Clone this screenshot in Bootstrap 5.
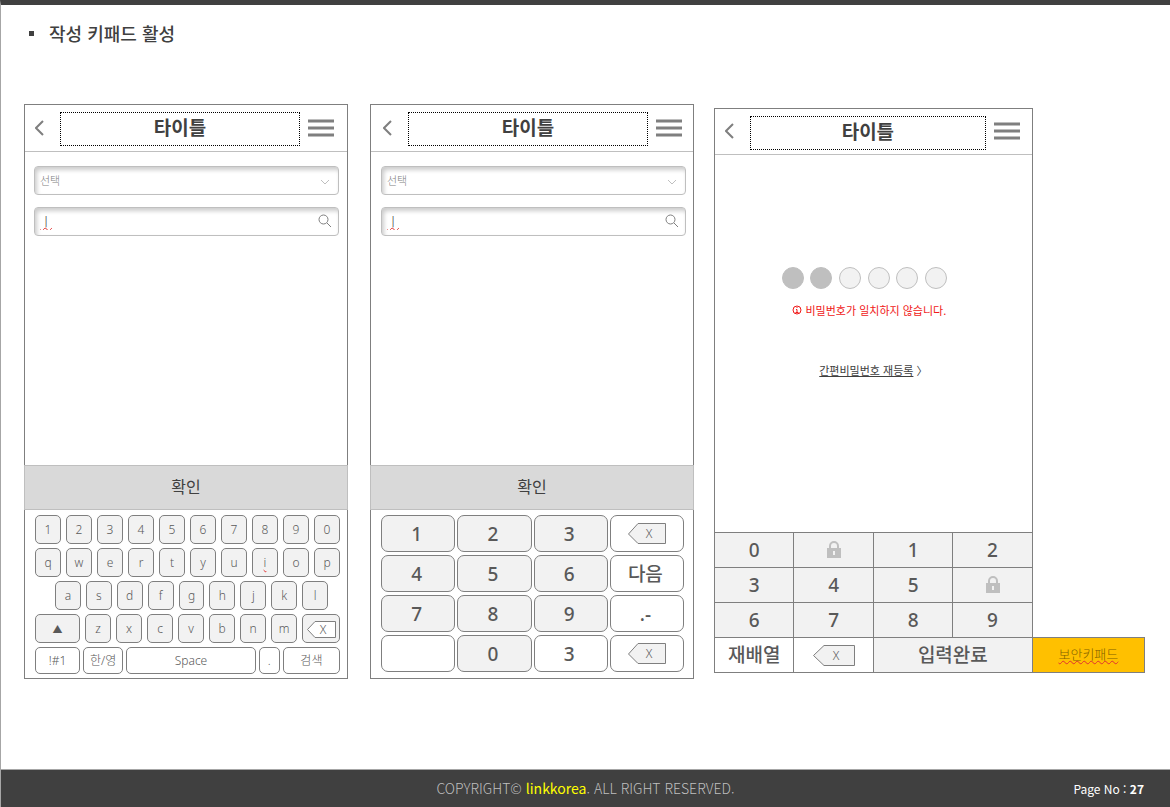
<!DOCTYPE html>
<html lang="ko">
<head>
<meta charset="utf-8">
<meta name="viewport" content="width=device-width, initial-scale=1">
<title>작성 키패드 활성</title>
<link href="https://cdn.jsdelivr.net/npm/bootstrap@5.3.0/dist/css/bootstrap.min.css" rel="stylesheet">
<style>
  body { font-family: "Noto Sans", "Noto Sans CJK KR", sans-serif; color: #404040; }
  .sheet { border-top: 5px solid #404040; border-left: 1px solid #a6a6a6; }
  .sheet-title { font: 500 18px/26px "Noto Sans CJK KR", sans-serif; padding: 15px 28px 17px; gap: 15px; }
  .sheet-title::before { content: ""; width: 5px; height: 5px; background: #404040; }
  .board { display: grid; grid-template-columns: 346fr 344fr 431fr; padding: 41px 25px 0 23px; align-items: start; align-content: start; }
  .phone { border: 1px solid #7f7f7f; }
  .phone-first { margin-right: 22px; }
  .phone-second { margin-right: 20px; }
  .phone-pin { flex: 319 1 0; }
  .phone-bar { height: 47px; padding: 0 13px 1px 10px; border-bottom: 1px solid #bfbfbf; }
  .phone-second .phone-bar { padding-left: 12px; padding-right: 11px; }
  .phone-second .fields { padding-left: 10px; padding-right: 7px; }
  .phone-pin .phone-bar { height: 46px; padding-right: 12px; }
  .phone-title { border: 1px dotted #000; height: 34px; margin: 3px 8px 0 16px; font: 700 19px/28px "Noto Sans CJK KR", sans-serif; }
  .fields { padding: 14px 8px 0 9px; gap: 12px; height: 313px; }
  .field { height: 29px; width: 100%; border: 1px solid #bfbfbf; border-radius: 4px; background: #fff; padding: 0 28px 2px 5px; font: 300 11px/24px "Noto Sans CJK KR", sans-serif; color: #7f7f7f; box-shadow: inset 2px 3px 4px #ccc; appearance: none; }
  .field-entry { font-size: 13px; color: #404040; }
  .field-icon { position: absolute; right: 7px; top: 7px; pointer-events: none; }
  .squiggle { text-decoration: underline wavy #e03030 1px; text-decoration-skip-ink: none; }
  .confirm { height: 45px; margin: 0 -1px; width: calc(100% + 2px); background: #d9d9d9; border: 1px solid #bfbfbf; font: 400 16px/24px "Noto Sans CJK KR", sans-serif; color: #404040; padding: 0 0 3px; }
  .key { min-width: 0; padding: 0; border: 1px solid #7f7f7f; border-radius: 5px; background: #f2f2f2; color: #595959; font-size: 12px; font-weight: 300; line-height: 16px; }
  .key-plain { background: #fff; }
  .letters { padding: 5px 7px 4px 10px; display: grid; gap: 4px; }
  .letters .key { padding-top: 1px; }
  .key-row { display: grid; gap: 5px; height: 29px; }
  .row-ten { grid-template-columns: repeat(10, 1fr); }
  .row-nine { grid-template-columns: repeat(9, 1fr); padding: 0 12px 0 20px; }
  .row-shift { grid-template-columns: 45fr repeat(7, 26fr) 38fr; }
  .row-space { grid-template-columns: 45fr 40fr 129fr 21fr 57fr; gap: 3px; height: 27px; }
  .shift { font-size: 10px; }
  .digits { padding: 5px 9px 6px 10px; display: grid; grid-template-columns: repeat(4, 1fr); grid-auto-rows: 37px; column-gap: 2px; row-gap: 3px; }
  .digits .key, .secure .key { font-size: 19px; font-weight: 500; line-height: 24px; }
  .digits .key { border-radius: 7px; padding-right: 3px; }
  .digits .erase { padding-right: 0; }
  .passcode { height: 377px; padding-top: 112px; }
  .pin { width: 22px; height: 22px; border: 1px solid #bfbfbf; border-radius: 50%; background: #f2f2f2; }
  .pin-on { background: #bfbfbf; }
  .pins { width: 165px; margin: 0 auto; position: relative; }
  .pins-wrap { padding-right: 18px; }
  .error-line { color: #f01818; font: 400 11px/16px "Noto Sans CJK KR", sans-serif; margin-top: 13px; gap: 3px; padding-right: 8px; }
  .again { color: #404040; font: 400 11px/16px "Noto Sans CJK KR", sans-serif; margin-top: 44px; }
  .secure { display: grid; grid-template-columns: repeat(4, 1fr); grid-auto-rows: 34px; gap: 1px; background: #7f7f7f; border-top: 1px solid #7f7f7f; }
  .secure .key { border: 0; border-radius: 0; }
  .wide { grid-column: span 2; }
  .tag { flex: 112 1 0; height: 36px; background: #ffc000; border: 1px solid #7f7f7f; border-left: 0; color: #7f6000; font: 300 13px/18px "Noto Sans CJK KR", sans-serif; padding-bottom: 2px; }
  .foot { height: 38px; background: #404040; border-top: 1px solid #a6a6a6; color: #bfbfbf; font: 300 14px/20px "Noto Sans CJK KR", sans-serif; padding-bottom: 2px; }
  .foot a { color: #ff0; font-weight: 400; }
  .page-no { color: #fff; font-size: 12px; font-weight: 400; padding-right: 26px; }
</style>
<script src="https://cdn.jsdelivr.net/npm/bootstrap@5.3.0/dist/js/bootstrap.bundle.min.js"></script>
</head>
<body>
<svg class="d-none">
  <symbol id="back" viewBox="0 0 9 16"><path d="M8 1 1 8l7 7" fill="none" stroke="#7f7f7f" stroke-width="2"/></symbol>
  <symbol id="menu" viewBox="0 0 26 18"><path d="M0 2h26M0 9h26M0 16h26" stroke="#7f7f7f" stroke-width="3"/></symbol>
  <symbol id="down" viewBox="0 0 14 14"><path d="m3 7 4 4 4-4" fill="none" stroke="#bfbfbf"/></symbol>
  <symbol id="find" viewBox="0 0 14 14"><circle cx="5.500" cy="5.500" r="4.500" fill="none" stroke="#7f7f7f"/><path d="m9 9 4 4" stroke="#7f7f7f"/></symbol>
  <symbol id="lock" viewBox="0 0 16 18"><path d="M4 8V5a4 4 0 0 1 8 0v3" fill="none" stroke="#bfbfbf" stroke-width="2"/><path d="M1 7h14v10H1zM7 10v4h2v-4z" fill="#bfbfbf" fill-rule="evenodd"/></symbol>
</svg>
<div class="sheet min-vh-100 d-flex flex-column">
  <h1 class="sheet-title d-flex align-items-center m-0">작성 키패드 활성</h1>
  <main class="board flex-grow-1">
    <section class="phone phone-first">
      <header class="phone-bar d-flex align-items-center">
        <svg width="9" height="16"><use href="#back"/></svg>
        <h2 class="phone-title flex-grow-1 text-center">타이틀</h2>
        <svg width="26" height="18"><use href="#menu"/></svg>
      </header>
      <div class="fields d-flex flex-column">
        <div class="position-relative"><select class="field d-block" aria-label="선택"><option>선택</option></select><svg class="field-icon" width="14" height="14"><use href="#down"/></svg></div>
        <div class="position-relative"><input class="field field-entry squiggle d-block" aria-label="검색" value="ㅣ"><svg class="field-icon" width="14" height="14"><use href="#find"/></svg></div>
      </div>
      <button class="confirm d-block">확인</button>
      <div class="letters">
        <div class="key-row row-ten"><button class="key">1</button><button class="key">2</button><button class="key">3</button><button class="key">4</button><button class="key">5</button><button class="key">6</button><button class="key">7</button><button class="key">8</button><button class="key">9</button><button class="key">0</button></div>
        <div class="key-row row-ten"><button class="key">q</button><button class="key">w</button><button class="key">e</button><button class="key">r</button><button class="key">t</button><button class="key">y</button><button class="key">u</button><button class="key"><span class="squiggle">i</span></button><button class="key">o</button><button class="key">p</button></div>
        <div class="key-row row-nine"><button class="key">a</button><button class="key">s</button><button class="key">d</button><button class="key">f</button><button class="key">g</button><button class="key">h</button><button class="key">j</button><button class="key">k</button><button class="key">l</button></div>
        <div class="key-row row-shift"><button class="key shift">▲</button><button class="key">z</button><button class="key">x</button><button class="key">c</button><button class="key">v</button><button class="key">b</button><button class="key">n</button><button class="key">m</button><button class="key" aria-label="삭제"><svg class="d-block mx-auto" width="29" height="17" viewBox="0 0 29 17"><path d="M.5 8.500 8 .5h20.500v16H8z" fill="#fff" stroke="#7f7f7f"/><text x="16" y="13" text-anchor="middle" font-size="12" fill="#595959">X</text></svg></button></div>
        <div class="key-row row-space"><button class="key key-plain">!#1</button><button class="key key-plain">한/영</button><button class="key key-plain">Space</button><button class="key key-plain">.</button><button class="key key-plain">검색</button></div>
      </div>
    </section>
    <section class="phone phone-second">
      <header class="phone-bar d-flex align-items-center">
        <svg width="9" height="16"><use href="#back"/></svg>
        <h2 class="phone-title flex-grow-1 text-center">타이틀</h2>
        <svg width="26" height="18"><use href="#menu"/></svg>
      </header>
      <div class="fields d-flex flex-column">
        <div class="position-relative"><select class="field d-block" aria-label="선택"><option>선택</option></select><svg class="field-icon" width="14" height="14"><use href="#down"/></svg></div>
        <div class="position-relative"><input class="field field-entry squiggle d-block" aria-label="검색" value="ㅣ"><svg class="field-icon" width="14" height="14"><use href="#find"/></svg></div>
      </div>
      <button class="confirm d-block">확인</button>
      <div class="digits">
        <button class="key">1</button><button class="key">2</button><button class="key">3</button>
        <button class="key key-plain erase" aria-label="삭제"><svg class="d-block mx-auto" width="38" height="22" viewBox="0 0 38 22"><path d="M.5 11 10 .5h27.500v20H10z" fill="#f2f2f2" stroke="#7f7f7f"/><text x="21" y="15" text-anchor="middle" font-size="12" font-weight="300" fill="#595959">X</text></svg></button>
        <button class="key">4</button><button class="key">5</button><button class="key">6</button><button class="key key-plain">다음</button>
        <button class="key">7</button><button class="key">8</button><button class="key">9</button><button class="key key-plain">.-</button>
        <button class="key key-plain" aria-label="빈 키"></button><button class="key">0</button><button class="key key-plain">3</button>
        <button class="key key-plain erase" aria-label="삭제"><svg class="d-block mx-auto" width="38" height="22" viewBox="0 0 38 22"><path d="M.5 11 10 .5h27.500v20H10z" fill="#f2f2f2" stroke="#7f7f7f"/><text x="21" y="15" text-anchor="middle" font-size="12" font-weight="300" fill="#595959">X</text></svg></button>
      </div>
    </section>
    <div class="d-flex align-items-end pt-1">
      <section class="phone phone-pin">
        <header class="phone-bar d-flex align-items-center">
          <svg width="9" height="16"><use href="#back"/></svg>
          <h2 class="phone-title flex-grow-1 text-center">타이틀</h2>
          <svg width="26" height="18"><use href="#menu"/></svg>
        </header>
        <div class="passcode text-center">
          <div class="pins-wrap"><div class="pins d-flex justify-content-between"><i class="pin pin-on"></i><i class="pin pin-on"></i><i class="pin"></i><i class="pin"></i><i class="pin"></i><i class="pin"></i></div></div>
          <p class="error-line d-flex align-items-center justify-content-center mb-0"><svg width="10" height="10" viewBox="0 0 10 10"><circle cx="5" cy="5" r="4" fill="none" stroke="currentColor"/><path d="M5 2v1M4 4.500h1V8M3.500 7.500h3" fill="none" stroke="currentColor"/></svg>비밀번호가 일치하지 않습니다.</p>
          <p class="again mb-0"><a class="text-reset" href="#">간편비밀번호 재등록</a> 〉</p>
        </div>
        <div class="secure">
          <button class="key">0</button><button class="key" aria-label="잠금"><svg class="d-block mx-auto" width="16" height="18"><use href="#lock"/></svg></button><button class="key">1</button><button class="key">2</button>
          <button class="key">3</button><button class="key">4</button><button class="key">5</button><button class="key" aria-label="잠금"><svg class="d-block mx-auto" width="16" height="18"><use href="#lock"/></svg></button>
          <button class="key">6</button><button class="key">7</button><button class="key">8</button><button class="key">9</button>
          <button class="key key-plain">재배열</button><button class="key key-plain" aria-label="삭제"><svg class="d-block mx-auto" width="42" height="21" viewBox="0 0 42 21"><path d="M.5 10.500 11 .5h30.500v20H11z" fill="#f2f2f2" stroke="#7f7f7f"/><text x="23" y="15" text-anchor="middle" font-size="12" font-weight="300" fill="#595959">X</text></svg></button><button class="key wide">입력완료</button>
        </div>
      </section>
      <div class="tag d-flex align-items-center justify-content-center"><span class="squiggle">보안키패드</span></div>
    </div>
  </main>
  <footer class="foot d-grid align-items-center position-relative text-center">
    <div>COPYRIGHT© <a class="text-decoration-none" href="#">linkkorea</a>. ALL RIGHT RESERVED.</div>
    <div class="page-no position-absolute end-0">Page No : <b>27</b></div>
  </footer>
</div>
</body>
</html>
